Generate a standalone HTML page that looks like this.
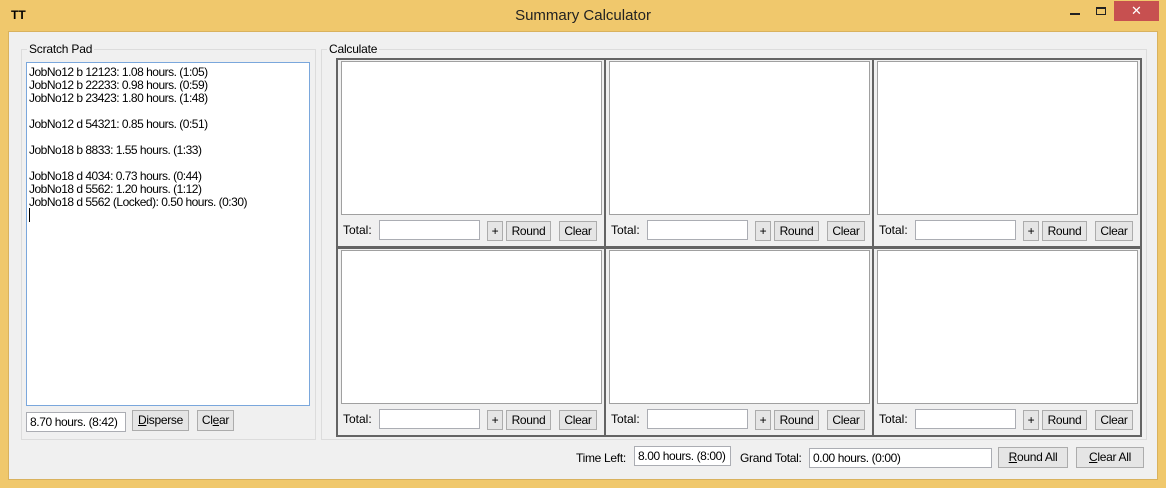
<!DOCTYPE html>
<html><head><meta charset="utf-8"><style>
*{margin:0;padding:0;box-sizing:border-box}
body{width:1166px;height:488px;background:#f0c86c;position:relative;overflow:hidden;font-family:"Liberation Sans",sans-serif;font-size:12px;color:#000}
.a{position:absolute}
.client{left:8px;top:31px;width:1150px;height:449px;background:#f0f0f0;border:1px solid #d9b25e}
.gb{border:1px solid #dcdcdc}
.lbl{background:#f0f0f0;padding:0 2px;white-space:nowrap;letter-spacing:-0.2px}
.tb{background:#fff;border:1px solid #abadb3;white-space:nowrap;padding:0 3px;line-height:18px;letter-spacing:-0.4px}
.btn{background:#e5e5e5;border:1px solid #acacac;text-align:center;line-height:19px;letter-spacing:-0.3px}
.panel{border:2px solid #646464;background:#f0f0f0}
.inner{position:absolute;left:3px;top:1px;width:261px;height:154px;background:#fff;border:1px solid #a0a0a0}
</style></head><body>
<div class="a" style="left:11px;top:8px;font-weight:bold;font-size:12px">TT</div>
<div class="a" style="left:0;width:1166px;top:7px;text-align:center;font-size:15px;color:#222">Summary Calculator</div>
<div class="a" style="left:1070px;top:13px;width:10px;height:2px;background:#222"></div>
<div class="a" style="left:1096px;top:7px;width:10px;height:8px;border:1px solid #222;border-top-width:2px"></div>
<div class="a" style="left:1114px;top:1px;width:45px;height:20px;background:#c75050;color:#fff;text-align:center;font-size:13px;line-height:20px">✕</div>
<div class="a client"></div>

<div class="a gb" style="left:21px;top:49px;width:295px;height:391px"></div>
<div class="a lbl" style="left:27px;top:42px">Scratch Pad</div>
<div class="a" style="left:26px;top:62px;width:284px;height:344px;background:#fff;border:1px solid #7aa7dc;padding:3px 2px;line-height:13px;letter-spacing:-0.5px;white-space:pre">JobNo12 b 12123: 1.08 hours. (1:05)
JobNo12 b 22233: 0.98 hours. (0:59)
JobNo12 b 23423: 1.80 hours. (1:48)

JobNo12 d 54321: 0.85 hours. (0:51)

JobNo18 b 8833: 1.55 hours. (1:33)

JobNo18 d 4034: 0.73 hours. (0:44)
JobNo18 d 5562: 1.20 hours. (1:12)
JobNo18 d 5562 (Locked): 0.50 hours. (0:30)
<span style="border-left:1px solid #000"> </span></div>
<div class="a tb" style="left:26px;top:412px;width:100px;height:20px">8.70 hours. (8:42)</div>
<div class="a btn" style="left:132px;top:410px;width:57px;height:21px"><u>D</u>isperse</div>
<div class="a btn" style="left:197px;top:410px;width:37px;height:21px">Cl<u>e</u>ar</div>

<div class="a gb" style="left:321px;top:49px;width:826px;height:391px"></div>
<div class="a lbl" style="left:327px;top:42px">Calculate</div>

<div id="grid"></div>
<script>
var h='';var xs=[336,604,872],ys=[58,247];
ys.forEach(function(y){xs.forEach(function(x){
h+='<div class="a panel" style="left:'+x+'px;top:'+y+'px;width:270px;height:190px"><div class="inner"></div></div>';
h+='<div class="a" style="left:'+(x+7)+'px;top:'+(y+165)+'px">Total:</div>';
h+='<div class="a tb" style="left:'+(x+43)+'px;top:'+(y+162)+'px;width:101px;height:20px"></div>';
h+='<div class="a btn" style="left:'+(x+151)+'px;top:'+(y+163)+'px;width:16px;height:20px">+</div>';
h+='<div class="a btn" style="left:'+(x+170)+'px;top:'+(y+163)+'px;width:45px;height:20px">Round</div>';
h+='<div class="a btn" style="left:'+(x+223)+'px;top:'+(y+163)+'px;width:38px;height:20px">Clear</div>';
});});
document.getElementById('grid').innerHTML=h;
</script>

<div class="a" style="left:576px;top:451px;letter-spacing:-0.3px">Time Left:</div>
<div class="a tb" style="left:634px;top:446px;width:97px;height:20px">8.00 hours. (8:00)</div>
<div class="a" style="left:740px;top:451px;letter-spacing:-0.3px">Grand Total:</div>
<div class="a tb" style="left:809px;top:448px;width:183px;height:20px">0.00 hours. (0:00)</div>
<div class="a btn" style="left:998px;top:447px;width:70px;height:21px"><u>R</u>ound All</div>
<div class="a btn" style="left:1076px;top:447px;width:68px;height:21px"><u>C</u>lear All</div>
</body></html>
